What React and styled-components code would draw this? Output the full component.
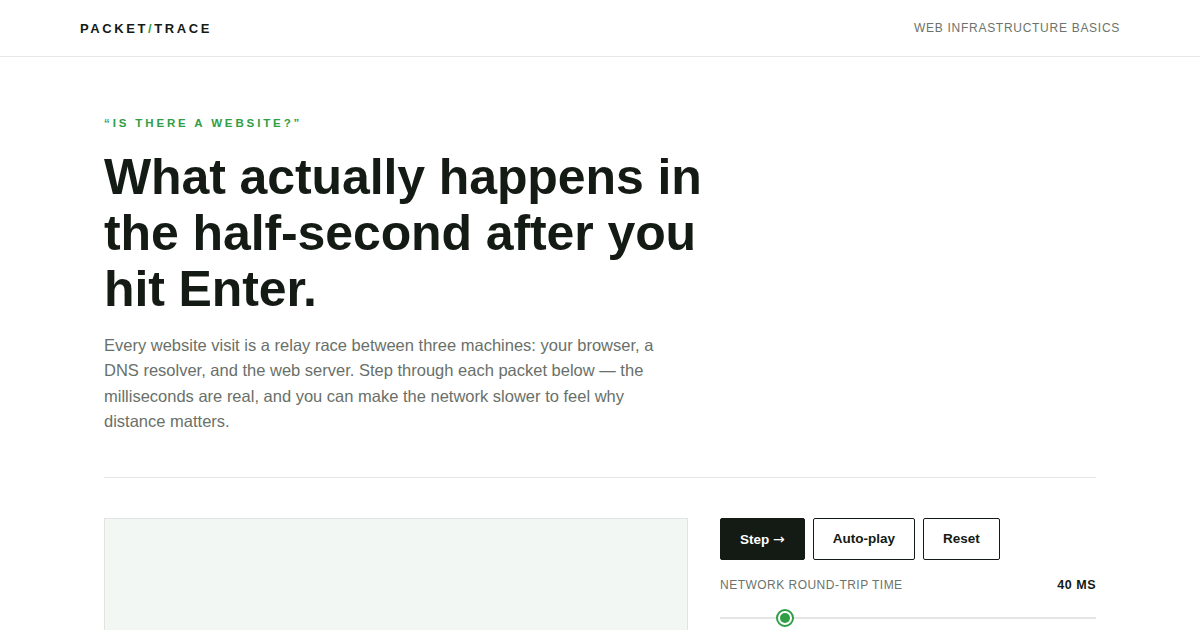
import React from 'react';
import styled, { createGlobalStyle } from 'styled-components';

const GlobalStyle = createGlobalStyle`
  * { box-sizing: border-box; }
  body {
    margin: 0;
    background: #fff;
    font-family: "Liberation Sans", Arial, sans-serif;
    color: #141a14;
  }
`;

const Header = styled.header`
  height: 57px;
  border-bottom: 1px solid #e6e8e6;
  display: flex;
  align-items: center;
  justify-content: space-between;
  padding: 0 80px;
`;

const Logo = styled.div`
  font-size: 13px;
  font-weight: 700;
  letter-spacing: 0.2em;
  color: #141a14;
  span { color: #2f9e44; }
`;

const Tagline = styled.div`
  font-size: 12px;
  letter-spacing: 0.06em;
  color: #6b736b;
`;

const Main = styled.main`
  max-width: 992px;
  margin: 0 auto;
  padding-top: 60px;
`;

const Eyebrow = styled.div`
  font-size: 11.5px;
  font-weight: 700;
  letter-spacing: 0.25em;
  color: #2f9e44;
  margin-bottom: 20px;
`;

const Title = styled.h1`
  margin: 0;
  font-size: 50px;
  line-height: 56px;
  font-weight: 700;
  letter-spacing: -0.002em;
  max-width: 640px;
  color: #141a14;
`;

const Lead = styled.p`
  margin: 16px 0 0;
  max-width: 560px;
  font-size: 16.5px;
  line-height: 25.4px;
  color: #697069;
`;

const Divider = styled.hr`
  border: 0;
  border-top: 1px solid #e3e6e3;
  margin: 42px 0 40px;
`;

const Stage = styled.section`
  display: grid;
  grid-template-columns: 584px 1fr;
  gap: 32px;
`;

const Canvas = styled.div`
  height: 260px;
  background: #f3f7f3;
  border: 1px solid #e1e5e1;
`;

const Controls = styled.div`
  display: flex;
  flex-direction: column;
`;

const ButtonRow = styled.div`
  display: flex;
  gap: 8px;
`;

const Button = styled.button`
  height: 42px;
  padding: 0 ${p => p.$pad}px;
  border-radius: 2px;
  border: 1px solid #141a14;
  background: ${p => (p.$primary ? '#141a14' : '#fff')};
  color: ${p => (p.$primary ? '#fff' : '#141a14')};
  font-family: "Liberation Sans", Arial, sans-serif;
  font-size: 13.5px;
  font-weight: 700;
  cursor: pointer;
`;

const Arrow = styled.span`
  font-family: "DejaVu Sans", sans-serif;
  font-weight: 400;
  font-size: 14px;
`;

const LabelRow = styled.div`
  margin-top: 18px;
  display: flex;
  justify-content: space-between;
  align-items: center;
  font-size: 12px;
`;

const Label = styled.span`
  letter-spacing: 0.04em;
  color: #6b736b;
`;

const Value = styled.span`
  font-weight: 700;
  font-size: 12.5px;
  letter-spacing: 0.04em;
  color: #141a14;
`;

const Track = styled.div`
  position: relative;
  margin-top: 25px;
  height: 2px;
  background: #e3e6e3;
`;

const Thumb = styled.div`
  position: absolute;
  top: 50%;
  width: 18px;
  height: 18px;
  margin: -9px 0 0 -9px;
  border-radius: 50%;
  border: 2px solid #2f9e44;
  background: #fff;
  display: flex;
  align-items: center;
  justify-content: center;
  &::after {
    content: '';
    width: 10px;
    height: 10px;
    border-radius: 50%;
    background: #2f9e44;
  }
`;

export default function App() {
  const rtt = 40;
  const pct = 17.3;
  return (
    <>
      <GlobalStyle />
      <Header>
        <Logo>PACKET<span>/</span>TRACE</Logo>
        <Tagline>WEB INFRASTRUCTURE BASICS</Tagline>
      </Header>
      <Main>
        <Eyebrow>“IS THERE A WEBSITE?”</Eyebrow>
        <Title>What actually happens in the half-second after you hit Enter.</Title>
        <Lead>
          Every website visit is a relay race between three machines: your browser, a DNS
          resolver, and the web server. Step through each packet below — the milliseconds are
          real, and you can make the network slower to feel why distance matters.
        </Lead>
        <Divider />
        <Stage>
          <Canvas />
          <Controls>
            <ButtonRow>
              <Button $primary $pad={19}>Step <Arrow>→</Arrow></Button>
              <Button $pad={19}>Auto-play</Button>
              <Button $pad={19}>Reset</Button>
            </ButtonRow>
            <LabelRow>
              <Label>NETWORK ROUND-TRIP TIME</Label>
              <Value>{rtt} MS</Value>
            </LabelRow>
            <Track>
              <Thumb style={{ left: `${pct}%` }} />
            </Track>
          </Controls>
        </Stage>
      </Main>
    </>
  );
}
